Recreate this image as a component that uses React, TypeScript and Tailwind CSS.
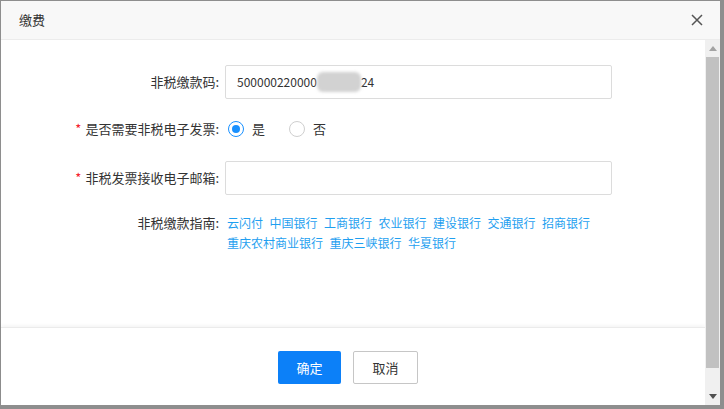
import React from "react";

const links = ["云闪付", "中国银行", "工商银行", "农业银行", "建设银行", "交通银行", "招商银行", "重庆农村商业银行", "重庆三峡银行", "华夏银行"];

function Radio({ checked, label }: { checked: boolean; label: string }) {
  return (
    <label className="flex items-center">
      <span
        className={
          checked
            ? "w-[16px] h-[16px] rounded-full border border-[#1890ff] flex items-center justify-center bg-white"
            : "w-[16px] h-[16px] rounded-full border border-[#cfcfcf] bg-white"
        }
      >
        {checked && <span className="w-[8px] h-[8px] rounded-full bg-[#1890ff]" />}
      </span>
      <span className="ml-[8px] text-[13px] text-[#333]">{label}</span>
    </label>
  );
}

export default function App() {
  return (
    <div
      className="w-[724px] h-[409px] bg-[#8e8e8e] pt-px pl-px pr-[4px] pb-[4px] overflow-hidden"
      style={{ fontFamily: '"Noto Sans CJK SC", "Liberation Sans", sans-serif' }}
    >
      <div className="w-full h-full flex flex-col bg-white">
        {/* header */}
        <div className="h-[39px] shrink-0 bg-[#f8f8f8] border-b border-[#ececec] flex items-center justify-between pl-[18px] pr-[17px]">
          <span className="text-[13px] text-[#333]">缴费</span>
          <svg width="12" height="12" viewBox="0 0 12 12" className="text-[#555]">
            <path d="M1 1L11 11M11 1L1 11" stroke="currentColor" strokeWidth="1.5" />
          </svg>
        </div>
        {/* body */}
        <div className="flex-1 flex min-h-0">
          <div className="flex-1 flex flex-col">
            <div className="h-[287px] shrink-0 text-[13px] text-[#333]">
              <div className="flex items-center mt-[25px] h-[34px]">
                <div className="w-[218px] text-right">非税缴款码:</div>
                <div className="ml-[6px] w-[387px] h-[34px] border border-[#dcdcdc] rounded-[2px] flex items-center pl-[11px] text-[12px]">
                  <span>500000220000</span>
                  <span className="inline-block w-[44px] h-[20px] bg-[#d2d2d2] rounded-[6px] blur-[1.5px]" />
                  <span>24</span>
                </div>
              </div>
              <div className="flex items-center mt-[13px] h-[34px]">
                <div className="w-[218px] text-right">
                  <span className="text-[#f5222d] mr-[4px]">*</span>是否需要非税电子发票:
                </div>
                <div className="ml-[9px] flex items-center gap-[24px]">
                  <Radio checked label="是" />
                  <Radio checked={false} label="否" />
                </div>
              </div>
              <div className="flex items-center mt-[15px] h-[34px]">
                <div className="w-[218px] text-right">
                  <span className="text-[#f5222d] mr-[4px]">*</span>非税发票接收电子邮箱:
                </div>
                <div className="ml-[6px] w-[387px] h-[34px] border border-[#dcdcdc] rounded-[2px]" />
              </div>
              <div className="flex items-start mt-[18px] leading-[20px]">
                <div className="w-[218px] text-right">非税缴款指南:</div>
                <div className="ml-[8px] w-[372px] flex flex-wrap gap-x-[6.5px] text-[12px]">
                  {links.map((l) => (
                    <span key={l} className="text-[#1f9ff0]">
                      {l}
                    </span>
                  ))}
                </div>
              </div>
            </div>
            <div className="flex-1 border-t border-[#ebebeb] shadow-[0_-2px_3px_rgba(0,0,0,0.04)] flex items-start pt-[23px] pl-[277px] gap-[12px]">
              <button className="w-[63px] h-[33px] bg-[#0c80f8] text-white text-[13px] rounded-[2px]">确定</button>
              <button className="w-[65px] h-[33px] bg-white border border-[#c6c6c6] text-[#333] text-[13px] rounded-[2px]">取消</button>
            </div>
          </div>
          {/* scrollbar */}
          <div className="w-[15px] shrink-0 bg-[#f0f0f0] flex flex-col items-center">
            <div className="h-[17px] flex items-center justify-center">
              <svg width="8" height="5" viewBox="0 0 8 5"><path d="M0 5L4 0L8 5Z" fill="#a3a3a3" /></svg>
            </div>
            <div className="w-[13px] h-[311px] bg-[#c1c1c1]" />
            <div className="flex-1" />
            <div className="h-[17px] flex items-center justify-center">
              <svg width="8" height="5" viewBox="0 0 8 5"><path d="M0 0L8 0L4 5Z" fill="#505050" /></svg>
            </div>
          </div>
        </div>
      </div>
    </div>
  );
}
